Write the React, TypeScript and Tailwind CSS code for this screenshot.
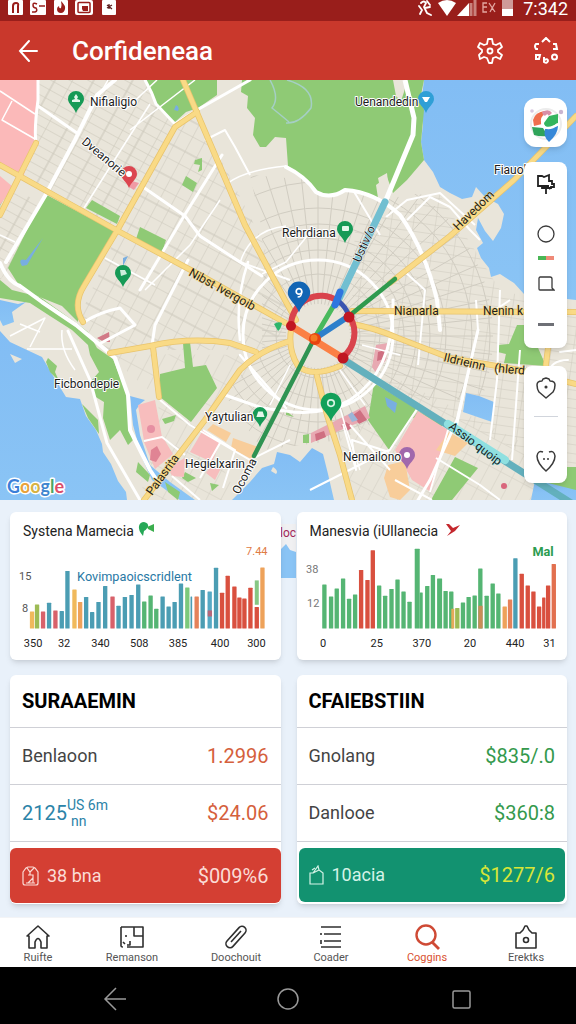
import React from "react";

type Bar = [number, number, string, number?];

const T = "#4b9db3";
const G = "#55b573";
const R = "#d9503f";
const P = "#d8616a";
const O = "#eea25a";
const Y = "#f0b95c";
const L = "#9dbb55";
const C = "#e5825a";

const leftBars: Bar[] = [
  [96, 333, Y], [111, 312, L], [129, 333, P], [147, 307, T], [166, 330, P], [185, 332, T], [202, 212, T],
  [223, 267, Y], [240, 305, O], [258, 290, T], [276, 335, T], [295, 305, T], [315, 257, T], [337, 288, P],
  [355, 316, T], [374, 290, T], [394, 284, T], [414, 252, T], [432, 303, G], [451, 285, G], [468, 325, G],
  [487, 288, T], [505, 318, T], [523, 305, T], [542, 249, T], [561, 261, "#7cc97b"], [573, 288, T, 5],
  [589, 288, C], [607, 269, T], [628, 273, "#55a9c4"], [647, 202, T], [665, 277, R], [682, 226, R], [702, 258, R],
  [717, 291, R], [732, 294, R], [750, 262, R], [769, 320, R], [786, 201, O],
];

const rightBars: Bar[] = [
  [112, 252, G], [132, 288, G], [149, 264, G], [168, 234, G], [186, 295, G], [204, 282, G], [222, 209, R],
  [241, 239, R], [257, 150, R], [276, 255, G], [294, 286, G], [313, 266, G], [331, 237, G], [349, 273, G],
  [367, 304, G], [390, 145, G, 15], [402, 276, G, 9], [420, 257, G], [437, 224, G], [457, 234, G, 15], [475, 272, G],
  [492, 273, G], [510, 323, L], [527, 306, G], [544, 290, G], [562, 285, G], [579, 204, G], [598, 286, G],
  [616, 249, G], [633, 279, G], [652, 318, O], [668, 297, C], [684, 174, T], [703, 220, R], [721, 255, R],
  [738, 273, R], [755, 318, R], [769, 291, R, 10], [782, 255, R], [799, 191, "#e2704f"],
];

function Bars({ bars }: { bars: Bar[] }) {
  return (
    <>
      {bars.map(([x, y, fill, w = 13], i) => (
        <rect key={i} x={x - w / 2} y={y} width={w} height={384 - y} rx={1.5} fill={fill} />
      ))}
    </>
  );
}

function Ticks({ items }: { items: [number, string][] }) {
  return (
    <g fontSize="33" fill="#222" textAnchor="middle">
      {items.map(([x, t]) => (
        <text key={t} x={x} y={440}>{t}</text>
      ))}
    </g>
  );
}

function Pin({ x, y, s = 1, fill, children }: { x: number; y: number; s?: number; fill: string; children?: React.ReactNode }) {
  return (
    <g transform={`translate(${x} ${y}) scale(${s})`}>
      <path d="M0 11C-2 5-8 2-8-3a8 8 0 0 1 16 0C8 2 2 5 0 11Z" fill={fill} />
      {children ?? <circle cy="-3" r="3" fill="#fff" />}
    </g>
  );
}

const rays = Array.from({ length: 60 }, (_, i) => (i * Math.PI) / 30);

function CityMap() {
  return (
    <svg
      viewBox="0 80 576 420"
      preserveAspectRatio="xMidYMid slice"
      className="block h-[420px] w-full bg-[#e9e5da]"
      role="img"
      aria-label="City map"
    >
      <defs>
        <pattern id="blocksA" width="34" height="9" patternUnits="userSpaceOnUse" patternTransform="rotate(29)">
          <path d="M0 0H34M0 0V9M19 0V9" stroke="#c9c5b8" strokeWidth="1" fill="none" />
        </pattern>
        <pattern id="blocksB" width="13" height="30" patternUnits="userSpaceOnUse" patternTransform="rotate(28)">
          <path d="M0 0V30M0 0H13M0 17H13" stroke="#cbc7bb" strokeWidth="1" fill="none" />
        </pattern>
        <pattern id="blocksC" width="22" height="9" patternUnits="userSpaceOnUse" patternTransform="rotate(8)">
          <path d="M0 0H22M0 0V9" stroke="#cdc9bd" strokeWidth="1" fill="none" />
        </pattern>
        <pattern id="blocksD" width="26" height="13" patternUnits="userSpaceOnUse" patternTransform="rotate(-62)">
          <path d="M0 0H26M0 0V13" stroke="#cbc7bb" strokeWidth="1" fill="none" />
        </pattern>
        <clipPath id="core">
          <path d="M262 230 250 175 310 180 380 200 440 190 500 290V400L420 400 340 440 262 450 225 395 262 350Z" />
        </clipPath>
        <linearGradient id="sea" x1="0" y1="0" x2="0" y2="1">
          <stop offset="0" stopColor="#82bdf4" />
          <stop offset="1" stopColor="#8ac4f5" />
        </linearGradient>
      </defs>

      <rect x="0" y="80" width="576" height="420" fill="#e9e5da" />
      <path d="M38 80H145L175 124 118 228 0 168V135Z" fill="url(#blocksA)" />
      <path d="M175 126 197 112 262 240 292 326 160 255 118 230Z" fill="url(#blocksB)" />
      <path d="M118 232 292 328 258 350 107 350 78 320Z" fill="url(#blocksB)" />
      <path d="M0 182 45 205 8 270 0 280Z" fill="url(#blocksA)" />
      <path d="M355 225 440 195 500 290 576 310V480L350 365Z" fill="url(#blocksC)" />
      <path d="M107 354 262 355 200 425 240 500H352L340 440 400 380 576 470V500H140L160 400Z" fill="url(#blocksD)" opacity=".8" />
      <path d="M262 355 340 370 345 430 280 450 225 400Z" fill="#e9e5da" />

      <g clipPath="url(#core)" fill="none" stroke="#d0ccc1" strokeWidth="1">
        {[42, 62, 86, 98, 112, 128, 154, 172].map((r) => (
          <circle key={r} cx="318" cy="336" r={r} />
        ))}
        {rays.map((a, i) => (
          <path key={i} d={`M${318 + 32 * Math.cos(a)} ${336 + 32 * Math.sin(a)}L${318 + 175 * Math.cos(a)} ${336 + 175 * Math.sin(a)}`} />
        ))}
      </g>

      {/* water */}
      <g fill="url(#sea)">
        <path d="M424 80 421 105 423 125 421 142 424 160 433 172 440 187 450 193 462 199 472 197 476 187 485 197 498 204 504 214 501 228 493 241 485 231 478 218 476 230 483 243 477 248 481 258 489 268 491 277 500 274 514 283 524 294 576 300V80Z" />
        <path d="M0 331 10 342 27 350 42 357 52 374 66 397 80 399 86 416 96 430 102 444 103 452 111 464 118 481 126 492 127 500H0Z" />
        <path d="M0 300 18 304 26 302 12 312 14 322 3 326 0 320Z" />
        <path d="M232 500 250 482 262 468 274 464 277 452 290 455 300 462 312 448 323 454 328 474 334 500Z" />
        <path d="M466 393 479 396 494 402 492 422 463 412Z" />
        <path d="M130 396 145 400 140 404 136 410 140 435 150 465 170 482 195 500H180L152 480 142 458 133 425Z" />
        <path d="M535 480 576 478V500H531Z" />
      </g>
      <path d="M10 354 22 359 15 363Z M273 467q6 4 3 7l-5-3Z" fill="#e9e5da" />

      {/* parks */}
      <g fill="#8fca75">
        <path d="M242 80 241 92 248 96 247 108 255 118 253 135 260 147 266 147 275 137 286 138 288 166 308 180 318 194 330 197 346 189 365 194 378 198 376 185 387 177 393 193 407 180 424 160 421 142 424 110 420 100 424 80Z" />
        <path d="M145 80H217V95L198 108 186 112 174 123 160 110Z" />
        <path d="M45 194 114 231 80 290 78 322 62 306 22 290 8 268Z" />
        <path d="M0 186 8 190 0 206ZM92 200 120 216 117 224 86 208ZM140 227 166 240 162 252 136 239Z" />
        <path d="M186 176 197 183 193 192 182 185ZM195 160 202 158 202 170 198 172 200 165 194 164Z" />
        <path d="M0 280 12 290 40 297 75 322 88 332 97 348 113 359 120 377 127 395 128 412 133 440 128 445 120 430 110 440 103 418 104 402 94 396 92 380 99 372 90 355 88 345 72 330 50 316 30 303 0 298Z" />
        <path d="M48 358 57 366 55 372 59 381 50 372 46 362ZM82 404 98 420 99 434 88 418Z" />
        <path d="M160 374 185 368 183 343 190 342 193 367 206 365 217 388 191 422 160 397Z" />
        <path d="M374 383 417 409 389 450 368 420Z" />
        <path d="M418 411 443 424 440 429 413 418ZM455 457 478 468 452 500H431Z" />
        <path d="M498 345 509 344 517 325 528 325 546 366 504 363 506 354 498 352Z" />
        <path d="M303 435 309 434 309 443 303 443ZM286 411 294 417 286 415Z" />
        <path d="M162 419 176 415 174 421 165 424ZM185 472 196 478 188 482 182 478ZM210 483 219 485 212 491ZM138 462 150 475 148 482 136 472ZM165 482 180 492 178 500 168 492Z" />
        <path d="M553 467 576 467V490L536 480Z" />
        <path d="M392 475 405 469 406 477 396 481Z" opacity=".6" />
      </g>
      <path d="M393 80 407 80 404 92 401 101 396 96ZM419 167 426 163 430 177 438 189 430 191 421 187 412 186 423 179ZM378 178 387 173 389 192 382 197Z" fill="#e9e5da" />
      <path d="M176 105q4 2 2 6l-4-1ZM43 238 26 260q-9-2-4 6l5-1ZM123 258 128 256 123 266ZM385 397 397 403 395 413 387 406Z" fill="#78aee0" />
      <path d="M270 80q10 18 2 28 10 8 17 14M287 80q28 8 24 28-12 16-25 15" fill="none" stroke="#a5cfc4" strokeWidth="1.5" />

      {/* built-up zones */}
      <g fill="#f7bdbd">
        <path d="M0 80H38L36 140 22 180 0 165ZM0 176 13 187 0 205Z" fill="#fbb9b9" />
        <path d="M418 411 448 430 431 492 412 480 395 450Z" />
        <path d="M138 405 155 400 162 437 144 441ZM144 442 162 436 173 454 155 469Z" />
        <path d="M203 430 220 443 212 462 190 452ZM168 467 185 458 184 477 172 476ZM213 463 222 466 215 480 206 473Z" />
        <path d="M376 345 388 343 386 360 376 373 372 367Z" fill="#e8a9b2" />
        <path d="M311 433 365 406 370 418 348 427 311 443Z" fill="#e8a9b2" />
        <path d="M97 338 109 332 110 342 104 342Z" fill="#d27a87" />
        <path d="M132 181 139 183 134 190 129 187Z" fill="#f09ba5" />
      </g>
      <path d="M360 410l7 10-8 4-6-9ZM346 422l7 5-6 4-6-5ZM315 434l9-3 2 6-10 4ZM378 352l7-2-1 9-7 2Z" fill="#cf6f81" />
      <path d="M352 412l6 8-6 2-4-7Z" fill="#9cb5d8" />
      <g fill="#f8cd9a">
        <path d="M213 424 231 433 226 442 207 430ZM233 438 258 447 253 460 231 448ZM449 432 468 443 455 456 436 450ZM388 465 405 461 410 490 400 500 390 497 384 478Z" />
      </g>
      <circle cx="151" cy="429" r="4" fill="#e68fa2" />
      <path d="M151 450l6-4 4 8-5 8-6-2Z" fill="#e08494" />
      <circle cx="504" cy="486" r="3" fill="#d9667c" />

      {/* minor streets */}
      <g fill="none" stroke="#fff" strokeWidth="2" strokeLinejoin="round">
        <path d="M0 91 35 114 M12 101 2 120 35 139M108 80 77 135 M150 104 84 208M157 80 125 110M195 80 130 130" strokeWidth="1.5" />
        <path d="M143 187 185 216 200 236 240 262 290 280M205 140 225 130 235 147 250 175" />
        <path d="M240 263Q250 230 286 226M228 183Q245 170 286 166M220 200 190 245 145 290M262 274 286 262 312 230" strokeWidth="1.5" />
        <path d="M105 258 155 285M0 235 15 242" strokeWidth="1.5" />
        <path d="M27 349H72M10 336 45 318 30 347M20 324 40 332M62 330Q60 350 75 370" strokeWidth="1.5" />
        <path d="M160 400 190 425 250 460 290 440M144 441 162 437 185 455M172 476 200 500M220 443 200 478M203 430 235 450 223 488" />
        <path d="M343 424 356 470 352 440 389 452M350 425 390 470M389 451 417 409M389 450 310 490M448 430 430 492M436 458 480 485 500 500M395 480 432 500" />
        <path d="M476 300 478 330 457 425M500 290 497 380 490 440M520 350 512 460M495 310 510 300M405 272 425 290M425 290 418 365" />
        <path d="M407 220 430 197 450 207 470 230 480 240M353 190 380 235M386 217 407 200 440 193 475 225" />
      </g>
      <path d="M345 425l-5-17M344 422 360 470M290 365 270 405M340 370 365 405M362 345 400 355" stroke="#fff" strokeWidth="1.5" fill="none" />

      {/* white main roads */}
      <g fill="none" stroke="#fff" strokeWidth="4" strokeLinejoin="round" strokeLinecap="round">
        <path d="M115 80 97 95 75 140 45 196 6 262" />
        <path d="M38 80 38 100Q34 130 36 143M38 106 77 133M145 80Q152 92 156 104L175 124 197 110 250 80" strokeWidth="3" />
        <path d="M143 187 185 216 200 236 240 262 262 276" strokeWidth="3" />
        <path d="M222 155 184 216 140 290M188 260 155 325 152 345" strokeWidth="3" />
        <path d="M286 167Q305 176 316 192 330 200 345 190 375 192 400 215 425 250 437 300L440 330" />
        <path d="M0 263Q8 282 20 286L42 302 76 325 100 345 115 358 128 395 130 430 150 470 158 482" />
        <path d="M68 331 90 380 107 443 140 500M84 322Q100 312 120 308L135 325 101 343" strokeWidth="3" />
        <circle cx="318" cy="335" r="75" strokeWidth="3" />
        <path d="M225 395 262 408 286 411Q320 417 350 400 395 370 393 300" strokeWidth="3" />
        <path d="M240 340Q235 300 248 262M240 355 286 408" strokeWidth="2.5" />
        <path d="M478 330 457 420 430 480 418 500" strokeWidth="3" />
        <path d="M568 360Q550 360 548 375M576 350 560 352" strokeWidth="2" />
      </g>

      {/* arterial roads */}
      <g fill="none" strokeLinejoin="round" strokeLinecap="round">
        {["#e9c46c", "#f9da86"].map((stroke, i) => (
          <g key={stroke} stroke={stroke} strokeWidth={i ? 4.5 : 6}>
            <path d="M0 165 118 231 200 275 291 326" />
            <path d="M183 80 245 225 286 302 296 320" />
            <path d="M197 112 175 127 118 229 84 286Q72 305 83 322" />
            <path d="M36 143 0 215" />
            <path d="M110 353 150 346Q190 337 230 343L256 352M153 347 159 397" />
            <path d="M144 500 205 420 240 370Q260 350 290 341" />
            <path d="M291 330Q288 350 298 366 312 378 340 366M317 376 327 415 340 455 352 500" />
            <path d="M352 311 576 312M352 324Q375 328 398 338L450 358 520 370 576 384M548 348 544 380" />
            <path d="M390 283 450 236 514 180 576 116" />
          </g>
        ))}
      </g>
      <path d="M405 80 414 118 413 135 386 200" fill="none" stroke="#fff" strokeWidth="5" />

      {/* transit routes */}
      <g fill="none" strokeLinecap="round">
        <path d="M385 202 337 303" stroke="#72bfd1" strokeWidth="7" />
        <path d="M344 360 576 506" stroke="#63b0bd" strokeWidth="7" />
        <path d="M448 424 505 460" stroke="#8fe0e0" strokeWidth="8" />
        <path d="M314 339 254 456" stroke="#2f9352" strokeWidth="4.5" />
        <path d="M395 279 349 316" stroke="#2f9a4e" strokeWidth="4.5" />
        <path d="M334 305 314 339" stroke="#49b95c" strokeWidth="5" />
        <path d="M314 339 349 316" stroke="#2c7fcb" strokeWidth="6" />
        <path d="M291 326A30 30 0 0 1 338 301M350 317A31 31 0 0 1 343 357" stroke="#d9434c" strokeWidth="6" />
        <path d="M338 301A30 30 0 0 1 349 316" stroke="#3b55b0" strokeWidth="5" />
        <path d="M291 326 343 358" stroke="#fb8045" strokeWidth="7" />
        <path d="M340 292 335 305" stroke="#2f76df" strokeWidth="7" />
      </g>
      <g fill="#c01722">
        <circle cx="291" cy="326" r="5" />
        <circle cx="349" cy="317" r="5.5" />
        <circle cx="343" cy="358" r="5.5" />
      </g>
      <circle cx="315" cy="339" r="6" fill="#e8430f" />
      <circle cx="314" cy="338" r="3.5" fill="#f57a23" />
      <path d="M274 324q4-3 8-1-1 6-4 8Z" fill="#2db56b" />

      <Pin x={76} y={102} fill="#169a56"><path d="M-4 0V-2L-1-3-2-5 0-8 2-5 1-3 4-2V0Z" fill="#e3f5ea" /></Pin>
      <Pin x={123} y={276} fill="#169a56"><path d="M-3-6 2-6 4-2-2 0Z" fill="#cdeedb" /></Pin>
      <Pin x={129} y={177} fill="#dc4650" />
      <Pin x={426} y={102} fill="#2f9fd6"><path d="M-4-5h8l-3 5h-2Z" fill="#fff" /></Pin>
      <Pin x={345} y={232} fill="#169a56"><rect x="-3" y="-6" width="7" height="5" rx="1" fill="#e5f7eb" /></Pin>
      <Pin x={260} y={417} s={0.9} fill="#169a56"><path d="M-4 0-2-6 3-6 5 0Z" fill="#e5f7eb" /></Pin>
      <Pin x={407} y={458} fill="#a068ac" />
      <Pin x={299} y={297} s={1.4} fill="#1265b4"><circle cy="-4" r="2" fill="none" stroke="#fff" strokeWidth="1.2" /><path d="M2-4Q2 0 -1 0" fill="none" stroke="#fff" /></Pin>
      <Pin x={331} y={407} s={1.3} fill="#12a05a"><circle cy="-3" r="2.5" fill="none" stroke="#d8f3e4" strokeWidth="1.3" /></Pin>

      <g fontSize="12" fill="#1c1c1c" stroke="#fff" strokeWidth="2" strokeLinejoin="round" paintOrder="stroke">
        <text x="90" y="106">Nifialigio</text>
        <text x="355" y="106">Uenandedin</text>
        <text x="494" y="174">Fiauoll</text>
        <text x="282" y="237">Rehrdiana</text>
        <text x="54" y="388">Ficbondepie</text>
        <text x="205" y="421">Yaytulian</text>
        <text x="185" y="468">Hegielxarin</text>
        <text x="343" y="461">Nemailono</text>
        <text transform="translate(81 143) rotate(40)">Dveanorie</text>
        <g strokeWidth="1" stroke="#f9da86">
          <text x="394" y="315">Nianarla</text>
          <text x="483" y="315">Nenin ka</text>
          <text transform="translate(188 275) rotate(29)">Nibst Ivergoib</text>
          <text transform="translate(458 231) rotate(-44)">Havedom</text>
          <text transform="translate(443 361) rotate(13)">Ildrieinn</text>
          <text transform="translate(494 372) rotate(5)">(hlerd</text>
          <text transform="translate(152 496) rotate(-54)">Palasrita</text>
        </g>
        <text transform="translate(360 263) rotate(-66)" strokeWidth="1">Ustiv/o</text>
        <text transform="translate(448 428) rotate(37)" stroke="#8fe0e0" strokeWidth="1">Assio quoip</text>
        <text transform="translate(239 495) rotate(-62)">Ocoma</text>
      </g>
      <text
        x="7"
        y="493"
        fontFamily="Lato, sans-serif"
        fontSize="18"
        fontWeight="700"
        stroke="#fff"
        strokeWidth="3"
        strokeLinejoin="round"
        paintOrder="stroke"
      >
        <tspan fill="#3c7fd8">G</tspan><tspan fill="#e8a23a">o</tspan><tspan fill="#d6b243">o</tspan><tspan fill="#3f86d0">g</tspan><tspan fill="#4aa564">l</tspan><tspan fill="#db4d6a">e</tspan>
      </text>
    </svg>
  );
}

function StatusBar() {
  return (
    <div className="flex h-[21px] items-start justify-between bg-[#991e1b] px-2 text-white">
      <svg width="110" height="16" viewBox="8 0 110 16" aria-hidden="true">
        <g fill="#fff">
          <rect x="8" y="0" width="15" height="15" rx="1" />
          <rect x="30" y="0" width="16" height="15" rx="1" />
          <rect x="54" y="0" width="14" height="15" rx="1" />
          <rect x="75" y="0" width="18" height="15" rx="2" />
          <rect x="102" y="0" width="14" height="15" rx="1" />
        </g>
        <g fill="none" stroke="#991e1b" strokeWidth="2">
          <path d="M13 13V6q0-3 3-3t2 3v7" />
          <path d="M37 4q-4-2-4 1t3 3q2 3-1 4h-3M39 6h6" strokeWidth="1.5" />
          <rect x="78" y="2.500" width="12" height="10" rx="1" strokeWidth="1.500" />
        </g>
        <path d="M61 1q5 5 4 8-1 4-4 4-4 0-4-4 0-2 2-3 0 3 2 2 1-3 0-7ZM82 6h6v5h-5l-1-2Z" fill="#991e1b" />
        <path d="m107 5 5 4M107 8l5-3M109 4v5" stroke="#5d2020" strokeWidth="1.3" />
      </svg>
      <div className="flex items-start gap-1">
        <svg width="105" height="17" viewBox="416 0 105 17" aria-hidden="true">
          <path d="M423 3q3-3 5 0l-2 4 3 6 4 2M421 6l3 4-2 4M429 1l3 4M427 8l5-1" fill="none" stroke="#fff" strokeWidth="1.8" strokeLinecap="round" />
          <path d="M440 3Q449-3 458 3L449 16Z" fill="#fff" />
          <path d="M471 16H459L471 3Z" fill="#fff" />
          <path d="M473 16V3M477 16V0" stroke="#c9817c" strokeWidth="3" />
          <path d="M489 3h-4v9h4M485 7h4M491 3l6 9M497 3l-5 9" fill="none" stroke="#e3a6a1" strokeWidth="1.3" />
          <rect x="504" y="0" width="11" height="9" fill="#cf9a99" />
          <rect x="504" y="9" width="11" height="7" fill="#fff" />
        </svg>
        <span className="text-lg leading-[18px]">7:342</span>
      </div>
    </div>
  );
}

function MapTools() {
  const btn = "flex w-full items-center justify-center";
  return (
    <div className="absolute top-[18px] right-[9px] flex w-[43px] flex-col text-[#3a3a3a]">
      <button aria-label="Map layers" className="flex h-[49px] items-center justify-center rounded-xl bg-white shadow-md">
        <svg width="36" height="40" viewBox="0 0 36 40" aria-hidden="true">
          <circle cx="18" cy="21" r="15" fill="none" stroke="#ececec" strokeWidth="2" />
          <path d="M17 8Q7 9 5 17l1 6 8-2q-4-6 5-12Z" fill="#ef6e4d" />
          <path d="M14 9q7-4 10 1-4 5-9 2Z" fill="#d98fa8" />
          <path d="m16 20 5-7 9-2v9l-8 5q-6-1-6-5Z" fill="#34b55e" />
          <path d="m4 24 11 1 5 8q-8 1-14-1Z" fill="#2fa45a" />
          <path d="m17 26 13-3q0 8-9 16-6-5-4-13Z" fill="#3688d8" />
          <path d="M20 12q-9 6-4 12 6 3 14-3" fill="none" stroke="#fff" strokeWidth="2.500" />
          <circle cx="4" cy="8" r="1.800" fill="#d8c8e0" />
          <circle cx="33" cy="9" r="2.200" fill="#c8b5d0" />
        </svg>
      </button>
      <div className="mt-[15px] flex h-[186px] flex-col rounded-lg bg-white pt-2 shadow-md">
        <button aria-label="Pin" className={`${btn} h-7`}>
          <svg width="20" height="22" viewBox="0 0 20 22" fill="none" stroke="#222" strokeWidth="1.8" aria-hidden="true">
            <path d="M2 3H6L8 4 13 2V8H16V11H18V14H15V15H6V13H2ZM10 15V21M6 13H13M13 16l3-2" />
          </svg>
        </button>
        <button aria-label="Circle" className={`${btn} mt-5 h-8`}>
          <svg width="18" height="18" viewBox="0 0 18 18" fill="none" stroke="currentColor" strokeWidth="1.3" aria-hidden="true"><circle cx="9" cy="9" r="8" /></svg>
        </button>
        <span className="mx-auto mt-1.5 flex h-1 w-4"><i className="h-1 w-2 bg-[#49b655]" /><i className="h-1 w-2 bg-[#ef8a78]" /></span>
        <button aria-label="Area" className={`${btn} mt-2 h-8`}>
          <svg width="18" height="18" viewBox="0 0 18 18" fill="none" stroke="currentColor" strokeWidth="1.3" aria-hidden="true"><path d="M3 2H13Q15 2 15 4V13L17 15H14L3 15Q2 15 2 14V3Z" /></svg>
        </button>
        <button aria-label="Zoom out" className={`${btn} mt-2 h-8`}><span className="h-[3px] w-4 bg-[#6e7076]" /></button>
      </div>
      <div className="mt-[18px] flex h-[117px] flex-col items-center justify-between rounded-lg bg-white py-2 shadow-md">
        <button aria-label="Save place" className={`${btn} h-7`}>
          <svg width="20" height="22" viewBox="0 0 20 22" fill="none" stroke="currentColor" strokeWidth="1.5" strokeLinejoin="round" aria-hidden="true"><path d="M10 21 3 15Q1 12 1 8 1 4 6 4L7 2 10 1 13 2 14 4Q19 4 19 8 19 12 17 15Z" /><circle cx="10" cy="10" r=".8" fill="currentColor" /></svg>
        </button>
        <span className="-mt-4 h-px w-6 bg-gray-300" />
        <button aria-label="Favourites" className={`${btn} h-7`}>
          <svg width="20" height="22" viewBox="0 0 20 22" fill="none" stroke="currentColor" strokeWidth="1.5" aria-hidden="true"><path d="M13 2Q18 0 19 6 19 13 10 21 1 13 1 6 2 0 7 2" /><path d="M8 8v2M12 8v2" /></svg>
        </button>
      </div>
    </div>
  );
}

function Summary({ title, rows, footer }: { title: string; rows: [React.ReactNode, string, string][]; footer: React.ReactNode }) {
  return (
    <section className="relative rounded-md bg-white shadow-md">
      <table className="w-full border-collapse">
        <caption className="h-[52px] px-3 text-left text-xl leading-[52px] font-bold text-black">{title}</caption>
        <tbody>
          {rows.map(([label, value, color], i) => (
            <tr key={i} className="h-[57px] border-y border-[#cfd0d6]">
              <th scope="row" className="py-0 pl-3 text-left text-lg font-normal text-[#444]">{label}</th>
              <td className={`py-0 pr-3 text-right text-xl ${color}`}>{value}</td>
            </tr>
          ))}
        </tbody>
      </table>
      {footer}
    </section>
  );
}

const tabs: { label: string; icon: React.ReactNode; active?: boolean }[] = [
  { label: "Ruifte", icon: <path d="M2 12 13 2 24 12H22V24H16V18Q13 11 10 18V24H4V12Z" /> },
  { label: "Remanson", icon: <><path d="M2 3H24V23H8M2 3V22Q2 23 4 23M15 3V12H24M7 11v2M11 17v4H8M4 18l2 2" /></> },
  { label: "Doochouit", icon: <><rect x="9" y="0" width="8" height="26" rx="4" transform="rotate(42 13 13)" /><path d="M8 18 18 7" /></> },
  { label: "Coader", icon: <path d="M3 3H23M6 10H23M6 17H23M3 23H23M3 9v2M3 16v4" /> },
  { label: "Coggins", icon: <><circle cx="12" cy="11" r="9.500" strokeWidth="2.400" /><path d="m18 18 7 7" strokeWidth="2.800" /></>, active: true },
  { label: "Erektks", icon: <><path d="M3 9H7L10 6 12 2H14L16 6 19 9H23V24H3Z" /><circle cx="13" cy="16" r="2.500" /></> },
];

export default function App() {
  return (
    <div className="flex min-h-screen flex-col bg-[#e9f1fa] font-['Roboto',sans-serif]">
      <StatusBar />
      <header className="flex h-[59px] items-center bg-[#c9382c] px-4 text-white">
        <button aria-label="Back" className="flex size-6 items-center justify-center">
          <svg width="22" height="24" viewBox="0 0 22 24" fill="none" stroke="currentColor" strokeWidth="2" strokeLinecap="round" aria-hidden="true"><path d="M20 12H3M12 2 3 12l9 10" /></svg>
        </button>
        <h1 className="ml-8 text-[26px] leading-8 font-medium">Corfideneaa</h1>
        <div className="ml-auto flex items-center gap-7">
          <button aria-label="Settings">
            <svg width="28" height="28" viewBox="0 0 28 28" fill="none" stroke="currentColor" strokeWidth="1.8" strokeLinejoin="round" aria-hidden="true">
              <path d="M12 2h4l1 5 3 1 4-2 2 4-4 3v2l4 3-2 4-4-2-3 1-1 5h-3l-2-5-3-1-4 2-1-4 3-3v-2L2 10l2-4 4 2 3-1Z" /><circle cx="14" cy="14" r="2.500" />
            </svg>
          </button>
          <button aria-label="More">
            <svg width="28" height="28" viewBox="0 0 28 28" fill="none" stroke="currentColor" strokeWidth="2" aria-hidden="true">
              <path d="m10 5 4-4 4 4M7 7H4Q2 9 4 12H6M21 7h3l1 5h-4M4 18h4l-1 4H4ZM12 20v5q3 2 4-1 0-3-4-1" /><circle cx="22.500" cy="20" r="2.500" />
            </svg>
          </button>
        </div>
      </header>

      <div className="relative">
        <CityMap />
        <MapTools />
      </div>

      <main className="relative grid grow grid-cols-2 content-start gap-x-4 gap-y-[15px] pt-3 pr-[9px] pb-3 pl-[10px]">
        <svg className="absolute top-6 left-1/2 -ml-2 h-[54px] w-4" viewBox="0 0 16 54" aria-hidden="true">
          <path d="M0 0H16V54H0Z" fill="#f0f0f2" />
          <path d="M0 26 6 20 10 26 16 28V54H0Z" fill="#8ac4f5" />
          <text x="0" y="13" fontSize="12" fill="#a3285a">loc</text>
        </svg>
        <section className="relative h-[148px] rounded-md bg-white shadow-md">
          <h2 className="flex h-[29px] items-end gap-1 px-[13px] text-sm text-[#222]">
            Systena Mamecia
            <svg className="mb-1" width="17" height="15" viewBox="0 0 17 15" aria-hidden="true"><path d="M5 14Q0 8 1 4q1-4 5-4 5 1 4 5-2 3-4 4Z" fill="#26a857" /><path d="m9 5 7-3v8l-6-3Z" fill="#3bae4e" /></svg>
          </h2>
          <svg viewBox="30 122 810 348" className="block w-full" role="img" aria-label="Systena Mamecia bar chart">
            <Bars bars={leftBars} />
            <rect x="763" y="240" width="12" height="73" fill="#86c783" />
            <rect x="622" y="330" width="13" height="18" fill="#b5677a" />
            <g fontSize="33" fill="#555"><text x="57" y="240">15</text><text x="66" y="336">8</text></g>
            <text x="737" y="165" fontSize="33" fill="#df7b45">7.44</text>
            <text x="231" y="241" fontSize="38" fill="#2878a4">Kovimpaoicscridlent</text>
            <Ticks items={[[99, "350"], [192, "32"], [301, "340"], [417, "508"], [533, "385"], [659, "400"], [768, "300"]]} />
          </svg>
        </section>
        <section className="relative h-[148px] rounded-md bg-white shadow-md">
          <h2 className="flex h-[29px] items-end gap-1 px-[13px] text-sm text-[#222]">
            Manesvia (iUllanecia
            <svg className="mb-1 ml-1" width="15" height="14" viewBox="0 0 15 14" aria-hidden="true"><path d="M0 1 3 1 7 5 14 2 9 8 1 13 5 8Z" fill="#c4272d" /></svg>
          </h2>
          <svg viewBox="30 122 810 348" className="block w-full" role="img" aria-label="Manesvia bar chart">
            <Bars bars={rightBars} />
            <rect x="573" y="316" width="13" height="68" fill="#c98d57" />
            <rect x="492" y="325" width="9" height="59" fill="#e5ab59" />
            <g fontSize="33" fill="#777"><text x="57" y="217">38</text><text x="60" y="319">12</text></g>
            <text x="735" y="168" fontWeight="700" fontSize="38" fill="#2c9c50">Mal</text>
            <Ticks items={[[108, "0"], [269, "25"], [404, "370"], [548, "20"], [683, "440"], [786, "31"]]} />
          </svg>
        </section>

        <Summary
          title="SURAAEMIN"
          rows={[
            ["Benlaoon", "1.2996", "text-[#d5603c]"],
            [
              <span className="flex items-center text-xl text-[#2b83a8]">
                2125
                <span className="flex flex-col text-sm leading-4"><span>US 6m</span><span className="pl-1">nn</span></span>
              </span>,
              "$24.06",
              "text-[#d5603c]",
            ],
          ]}
          footer={
            <button className="mt-1.5 flex h-[55px] w-full items-center rounded-md bg-[#d43f33] px-3 text-lg text-[#fbdcd6]">
              <svg width="17" height="20" viewBox="0 0 17 20" fill="none" stroke="currentColor" strokeWidth="1.2" aria-hidden="true"><path d="M1 6 4 2 6 1H11L13 2 16 6V17Q16 19 14 19H3Q1 19 1 17ZM5 2 8 6 12 2M8 6v3M6 9h5v3L6 17M11 11v6M4 17h9" /></svg>
              <span className="ml-2">38 bna</span>
              <span className="ml-auto text-xl">$009%6</span>
            </button>
          }
        />
        <Summary
          title="CFAIEBSTIIN"
          rows={[
            ["Gnolang", "$835/.0", "text-[#34994c]"],
            ["Danlooe", "$360:8", "text-[#34994c]"],
          ]}
          footer={
            <div className="mt-1 rounded-md bg-white p-0.5">
              <button className="flex h-[54px] w-full items-center rounded-md bg-[#129270] px-2.5 text-lg text-[#d5f3e7]">
                <svg width="15" height="20" viewBox="0 0 15 20" fill="none" stroke="currentColor" strokeWidth="1.2" aria-hidden="true"><path d="M1 8H4L9 1 10 5 14 8V19H1ZM4 8 10 5M3 5 6 3" /></svg>
                <span className="ml-2">10acia</span>
                <span className="ml-auto text-xl text-[#d9e637]">$1277/6</span>
              </button>
            </div>
          }
        />
      </main>

      <nav className="grid h-[50px] grid-cols-[76fr_112fr_96fr_94fr_98fr_100fr] border-t border-gray-100 bg-white">
        {tabs.map((t) => (
          <a
            key={t.label}
            href="#"
            className={`flex flex-col items-center pt-1.5 text-[11px] leading-4 ${t.active ? "text-[#d9502f]" : "text-[#555]"}`}
          >
            <svg width="26" height="26" viewBox="0 0 26 26" fill="none" stroke={t.active ? "#cf4a35" : "#2f2f2f"} strokeWidth="1.6" strokeLinejoin="round" aria-hidden="true">{t.icon}</svg>
            {t.label}
          </a>
        ))}
      </nav>

      <div className="flex h-[57px] items-center justify-center gap-[149px] bg-black pt-1.5 text-[#999]">
        <button aria-label="System back">
          <svg width="24" height="24" viewBox="0 0 24 24" fill="none" stroke="currentColor" strokeWidth="1.5" aria-hidden="true"><path d="M23 12H2M13 1 2 12l11 11" /></svg>
        </button>
        <button aria-label="Home">
          <svg width="24" height="24" viewBox="0 0 24 24" fill="none" stroke="currentColor" strokeWidth="1.5" aria-hidden="true"><circle cx="12" cy="12" r="10" /></svg>
        </button>
        <button aria-label="Recent apps">
          <svg width="24" height="24" viewBox="0 0 24 24" fill="none" stroke="currentColor" strokeWidth="1.5" aria-hidden="true"><rect x="4" y="4" width="17" height="17" rx="1.500" /></svg>
        </button>
      </div>
    </div>
  );
}
